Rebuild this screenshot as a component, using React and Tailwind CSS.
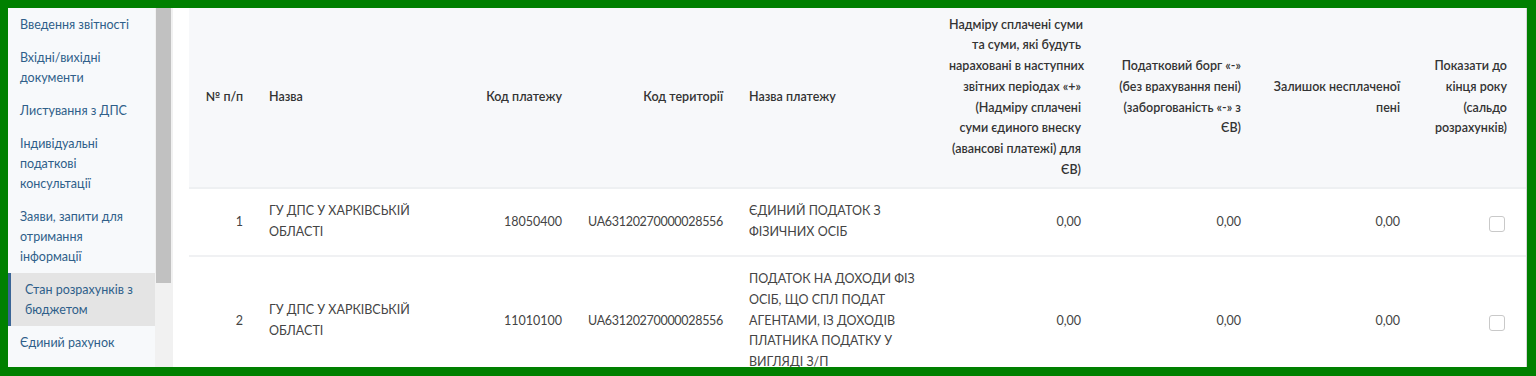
import { useState } from "react";

const menuItems = [
  ["Введення звітності"],
  ["Вхідні/вихідні", "документи"],
  ["Листування з ДПС"],
  ["Індивідуальні", "податкові", "консультації"],
  ["Заяви, запити для", "отримання", "інформації"],
  ["Стан розрахунків з", "бюджетом"],
  ["Єдиний рахунок"],
];
const activeIndex = 5;

const columns = [
  { key: "n", width: "w-[67px]", align: "text-right", title: ["№ п/п"] },
  { key: "name", width: "w-[204px]", align: "text-left", title: ["Назва"] },
  { key: "code", width: "w-[115px]", align: "text-right", title: ["Код платежу"] },
  { key: "territory", width: "w-[161px]", align: "text-right", title: ["Код території"] },
  { key: "payment", width: "w-[200px]", align: "text-left", title: ["Назва платежу"] },
  {
    key: "overpaid",
    width: "w-[158px]",
    align: "text-right",
    title: [
      "Надміру сплачені суми",
      "та суми, які будуть",
      "нараховані в наступних",
      "звітних періодах «+»",
      "(Надміру сплачені",
      "суми єдиного внеску",
      "(авансові платежі) для",
      "ЄВ)",
    ],
  },
  {
    key: "debt",
    width: "w-[160px]",
    align: "text-right",
    title: ["Податковий борг «-»", "(без врахування пені)", "(заборгованість «-» з", "ЄВ)"],
  },
  { key: "penalty", width: "w-[159px]", align: "text-right", title: ["Залишок несплаченої", "пені"] },
  { key: "show", width: "w-[113px]", align: "text-right", title: ["Показати до", "кінця року", "(сальдо", "розрахунків)"] },
];

const rows = [
  {
    n: "1",
    name: ["ГУ ДПС У ХАРКІВСЬКІЙ", "ОБЛАСТІ"],
    code: "18050400",
    territory: "UA63120270000028556",
    payment: ["ЄДИНИЙ ПОДАТОК З", "ФІЗИЧНИХ ОСІБ"],
    overpaid: "0,00",
    debt: "0,00",
    penalty: "0,00",
  },
  {
    n: "2",
    name: ["ГУ ДПС У ХАРКІВСЬКІЙ", "ОБЛАСТІ"],
    code: "11010100",
    territory: "UA63120270000028556",
    payment: [
      "ПОДАТОК НА ДОХОДИ ФІЗ",
      "ОСІБ, ЩО СПЛ ПОДАТ",
      "АГЕНТАМИ, ІЗ ДОХОДІВ",
      "ПЛАТНИКА ПОДАТКУ У",
      "ВИГЛЯДІ З/П",
    ],
    overpaid: "0,00",
    debt: "0,00",
    penalty: "0,00",
  },
];

const Lines = ({ lines }) =>
  (Array.isArray(lines) ? lines : [lines]).map((line, i) => (
    <div key={i} className="whitespace-nowrap">
      {line}
    </div>
  ));

const App = () => {
  const [checked, setChecked] = useState({});

  return (
    <div className="h-[376px] w-[1536px] bg-[#008000] pt-[8px] pl-[8px] pr-[9px] pb-[9px] font-['Lato',sans-serif]">
      <div className="flex h-full overflow-hidden border-r border-[#d6d6d6] bg-white">
        {/* side menu */}
        <aside className="flex w-[147px] shrink-0 flex-col bg-[#f7f9fb] text-[12.5px] leading-[20px] text-[#2f5f8a]">
          {menuItems.map((item, i) =>
            i === activeIndex ? (
              <div key={i} className="border-l-[3px] border-[#3b6596] bg-[#e4e4e4] py-[6.5px] pl-[14px]">
                <Lines lines={item} />
              </div>
            ) : (
              <div key={i} className="py-[6.5px] pl-[12px]">
                <Lines lines={item} />
              </div>
            )
          )}
        </aside>

        {/* scrollbar */}
        <div className="w-[18px] shrink-0 bg-[#f1f1f1] pl-[1px] pr-[2px]">
          <div className="h-[275px] bg-[#c1c1c1]" />
        </div>

        {/* table */}
        <main className="flex-1 pl-[16px]">
          <table className="w-[1337px] table-fixed border-collapse">
            <colgroup>
              {columns.map((c) => (
                <col key={c.key} className={c.width} />
              ))}
            </colgroup>
            <thead>
              <tr className="border-b-2 border-[#eef0f2] bg-[#f7f8fa]">
                {columns.map((c, i) => (
                  <th
                    key={c.key}
                    className={`${c.align} ${
                      i === columns.length - 1 ? "pr-[19px] pl-[13px]" : "px-[13px]"
                    } py-[6.5px] align-middle text-[12.5px] font-semibold leading-[20.8px] text-[#333]`}
                  >
                    <Lines lines={c.title} />
                  </th>
                ))}
              </tr>
            </thead>
            <tbody>
              {rows.map((r, ri) => (
                <tr key={ri} className="border-b-2 border-[#f0f1f3]">
                  {columns.map((c) =>
                    c.key === "show" ? (
                      <td key={c.key} className="py-[12px] pr-[21px] pl-[13px] text-right align-middle">
                        <input
                          type="checkbox"
                          checked={!!checked[ri]}
                          onChange={() => setChecked({ ...checked, [ri]: !checked[ri] })}
                          className="inline-block h-[16px] w-[16px] appearance-none rounded-[3px] border border-[#c9c9c9] bg-white align-middle checked:bg-[#3b6596]"
                        />
                      </td>
                    ) : (
                      <td
                        key={c.key}
                        className={`${c.align} ${
                          c.key === "territory" ? "tracking-[-0.3px]" : ""
                        } px-[13px] py-[12px] align-middle text-[12.5px] leading-[20.8px] text-[#444]`}
                      >
                        <Lines lines={r[c.key]} />
                      </td>
                    )
                  )}
                </tr>
              ))}
            </tbody>
          </table>
        </main>
      </div>
    </div>
  );
};

export default App;
